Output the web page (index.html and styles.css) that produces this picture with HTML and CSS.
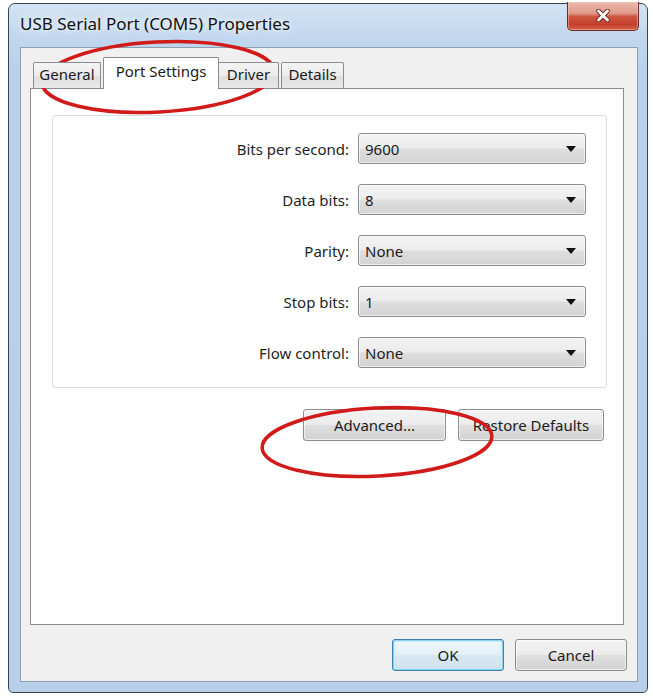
FILE: index.html
```html
<!DOCTYPE html>
<html>
<head>
<meta charset="utf-8">
<title>USB Serial Port (COM5) Properties</title>
<link rel="stylesheet" href="styles.css">
</head>
<body>
<div class="window">
  <div class="titlebar">
    <span class="title">USB Serial Port (COM5) Properties</span>
    <div class="close">
      <svg width="14" height="13" viewBox="0 0 14 13">
        <path d="M2.5 2 L11.5 11 M11.5 2 L2.5 11" stroke="#6b2a20" stroke-width="4.6" stroke-linecap="round" fill="none"/>
        <path d="M2.5 2 L11.5 11 M11.5 2 L2.5 11" stroke="#ffffff" stroke-width="2.8" stroke-linecap="round" fill="none"/>
      </svg>
    </div>
  </div>
  <div class="client">
    <div class="tabs">
      <div class="tab tab-general">General</div>
      <div class="tab tab-port selected">Port Settings</div>
      <div class="tab tab-driver">Driver</div>
      <div class="tab tab-details">Details</div>
    </div>
    <div class="panel">
      <div class="group">
        <div class="row"><span class="label">Bits per second:</span><div class="combo"><span>9600</span><svg class="arrow" width="10" height="6" viewBox="0 0 10 6"><polygon points="0,0 10,0 5,6"/></svg></div></div>
        <div class="row"><span class="label">Data bits:</span><div class="combo"><span>8</span><svg class="arrow" width="10" height="6" viewBox="0 0 10 6"><polygon points="0,0 10,0 5,6"/></svg></div></div>
        <div class="row"><span class="label">Parity:</span><div class="combo"><span>None</span><svg class="arrow" width="10" height="6" viewBox="0 0 10 6"><polygon points="0,0 10,0 5,6"/></svg></div></div>
        <div class="row"><span class="label">Stop bits:</span><div class="combo"><span>1</span><svg class="arrow" width="10" height="6" viewBox="0 0 10 6"><polygon points="0,0 10,0 5,6"/></svg></div></div>
        <div class="row"><span class="label">Flow control:</span><div class="combo"><span>None</span><svg class="arrow" width="10" height="6" viewBox="0 0 10 6"><polygon points="0,0 10,0 5,6"/></svg></div></div>
      </div>
      <div class="panel-actions">
        <button class="btn btn-advanced">Advanced...</button>
        <button class="btn btn-restore">Restore Defaults</button>
      </div>
    </div>
    <div class="footer">
      <button class="btn btn-dialog btn-default">OK</button>
      <button class="btn btn-dialog">Cancel</button>
    </div>
  </div>
</div>
<svg class="annotations" width="653" height="696" viewBox="0 0 653 696">
  <ellipse cx="158" cy="77" rx="116" ry="35" transform="rotate(-3 158 77)" fill="none" stroke="#d11a1a" stroke-width="3.5"/>
  <ellipse cx="377" cy="442" rx="115" ry="34" transform="rotate(-3 377 442)" fill="none" stroke="#d11a1a" stroke-width="3.5"/>
</svg>
</body>
</html>
```

FILE: styles.css
```css
* {
  box-sizing: border-box;
}

body {
  margin: 0;
  width: 653px;
  height: 696px;
  overflow: hidden;
  position: relative;
  background: #ffffff;
  font-family: "Noto Sans", "Liberation Sans", sans-serif;
  font-size: 15px;
  color: #1b1b1b;
}

.window {
  margin: 3px 0 0 8px;
  width: 640px;
  height: 690px;
  border: 1px solid #3a4450;
  border-radius: 7px 7px 5px 5px;
  background: linear-gradient(180deg, #d3e3f4 0px, #c3d8ef 30px, #b9d1ec 60px, #b7cfeb 100%);
  padding: 0 9px 10px 11px;
  display: flex;
  flex-direction: column;
}

.titlebar {
  height: 43px;
  display: flex;
  justify-content: space-between;
  align-items: flex-start;
  margin-right: -1px;
}

.title {
  padding-top: 10px;
  font-size: 17px;
  line-height: 20px;
  color: #111;
  text-shadow: 0 0 6px rgba(255, 255, 255, 0.9), 0 0 10px rgba(255, 255, 255, 0.7);
}

.close {
  width: 72px;
  height: 29px;
  margin-top: -2px;
  border: 1px solid #6a2e26;
  border-top: none;
  border-radius: 0 0 5px 5px;
  background: linear-gradient(180deg, #ecb9ad 0%, #e09a8b 40%, #cf5640 52%, #c4402c 80%, #d1604a 100%);
  box-shadow: inset 0 0 0 1px rgba(255, 210, 200, 0.45);
  display: flex;
  align-items: center;
  justify-content: center;
  padding-bottom: 2px;
}

.client {
  flex: 1;
  border: 1px solid #8e9eb0;
  background: #f0f0f0;
  padding: 9px 13px 10px 9px;
  display: flex;
  flex-direction: column;
}

.tabs {
  height: 31px;
  display: flex;
  align-items: flex-end;
  padding-left: 3px;
  position: relative;
  z-index: 1;
}

.tab {
  height: 26px;
  border: 1px solid #898c95;
  border-bottom: none;
  border-radius: 2px 2px 0 0;
  background: linear-gradient(180deg, #f4f4f4 0%, #ececec 50%, #dfdfdf 51%, #e8e8e8 100%);
  padding-top: 1px;
  line-height: 20px;
  text-align: center;
  white-space: nowrap;
}

.tab-general {
  width: 68px;
}

.tab-port {
  width: 116px;
  margin-left: 2px;
}

.tab-driver {
  width: 61px;
  margin-left: -1px;
}

.tab-details {
  width: 63px;
  margin-left: 2px;
}

.tab.selected {
  height: 32px;
  margin-bottom: -1px;
  padding-top: 3px;
  background: #ffffff;
  position: relative;
  z-index: 2;
}

.panel {
  height: 537px;
  border: 1px solid #898c95;
  background: #ffffff;
  padding: 26px 16px 0 21px;
}

.group {
  height: 273px;
  border: 1px solid #d8dde3;
  border-radius: 3px;
  padding: 17px 20px 19px 0;
  display: flex;
  flex-direction: column;
  gap: 20px;
}

.row {
  height: 31px;
  display: flex;
  justify-content: flex-end;
  align-items: center;
  gap: 9px;
}

.label {
  line-height: 20px;
  color: #1e1e1e;
}

.combo {
  width: 228px;
  height: 31px;
  border: 1px solid #8c8c8c;
  border-radius: 3px;
  background: linear-gradient(180deg, #f3f3f3 0%, #ececec 48%, #dedede 52%, #d3d3d3 100%);
  box-shadow: inset 0 0 0 1px rgba(255, 255, 255, 0.6);
  display: flex;
  align-items: center;
  justify-content: space-between;
  padding: 0 9px 0 6px;
  line-height: 20px;
}

.arrow {
  fill: #111;
}

.panel-actions {
  margin-top: 21px;
  padding-right: 3px;
  display: flex;
  justify-content: flex-end;
  gap: 12px;
}

.btn {
  height: 32px;
  border: 1px solid #8c8c8c;
  border-radius: 3px;
  background: linear-gradient(180deg, #f3f3f3 0%, #ececec 48%, #dedede 52%, #d3d3d3 100%);
  box-shadow: inset 0 0 0 1px rgba(255, 255, 255, 0.6);
  font-family: inherit;
  font-size: 15px;
  color: #1b1b1b;
  padding: 0;
  line-height: 20px;
}

.btn-advanced {
  width: 143px;
}

.btn-restore {
  width: 146px;
}

.footer {
  margin-top: 14px;
  margin-right: -3px;
  display: flex;
  justify-content: flex-end;
  gap: 11px;
}

.btn-dialog {
  width: 112px;
}

.btn-default {
  border-color: #3c7fb1;
  background: linear-gradient(180deg, #eef7fc 0%, #e3f1f9 48%, #d6e8f2 52%, #cfe2ee 100%);
  box-shadow: inset 0 0 0 1px #8fd3f2, inset 0 0 0 2px rgba(190, 235, 252, 0.8);
}

.annotations {
  position: absolute;
  top: 0;
  left: 0;
  pointer-events: none;
}
```
